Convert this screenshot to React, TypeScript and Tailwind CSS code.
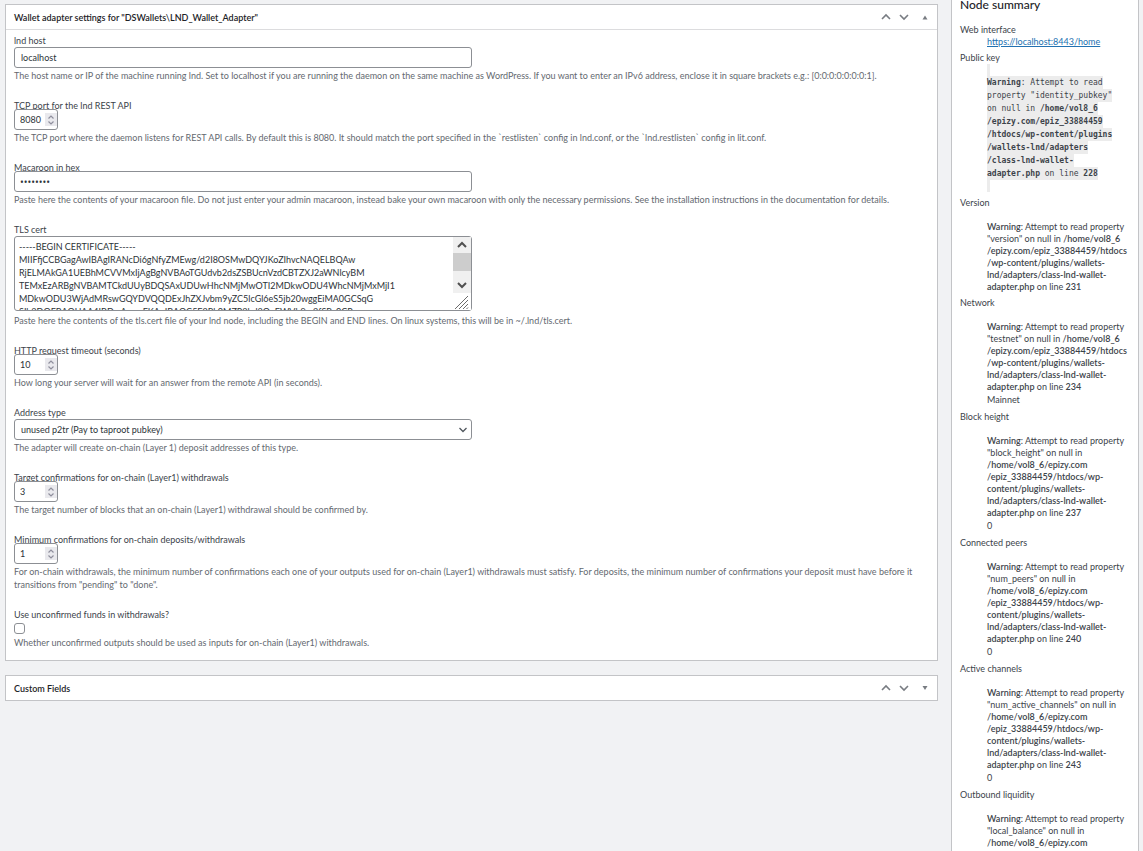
import type { ReactNode } from "react";

const CERT = `-----BEGIN CERTIFICATE-----
MIIFfjCCBGagAwIBAgIRANcDi6gNfyZMEwg/d2I8OSMwDQYJKoZIhvcNAQELBQAw
RjELMAkGA1UEBhMCVVMxIjAgBgNVBAoTGUdvb2dsZSBUcnVzdCBTZXJ2aWNlcyBM
TEMxEzARBgNVBAMTCkdUUyBDQSAxUDUwHhcNMjMwOTI2MDkwODU4WhcNMjMxMjI1
MDkwODU3WjAdMRswGQYDVQQDExJhZXJvbm9yZC5lcGl6eS5jb20wggEiMA0GCSqG
SIb3DQEBAQUAA4IBDwAwggEKAoIBAQC5F2Rk0MZP3hd3QoEWVh9m2fSRc0CP`;

type Warning = {
  title: string;
  property: string;
  path: string[];
  line: number;
  value?: string;
};

const SHORT_PATH = ["/epizy.com/epiz_33884459/htdocs", "/wp-content/plugins/wallets-", "lnd/adapters/class-lnd-wallet-", "adapter.php"];
const LONG_PATH = ["/home/vol8_6/epizy.com", "/epiz_33884459/htdocs/wp-", "content/plugins/wallets-", "lnd/adapters/class-lnd-wallet-", "adapter.php"];

const warnings: Warning[] = [
  { title: "Version", property: "version", path: ["/home/vol8_6", ...SHORT_PATH], line: 231 },
  { title: "Network", property: "testnet", path: ["/home/vol8_6", ...SHORT_PATH], line: 234, value: "Mainnet" },
  { title: "Block height", property: "block_height", path: ["", ...LONG_PATH], line: 237, value: "0" },
  { title: "Connected peers", property: "num_peers", path: ["", ...LONG_PATH], line: 240, value: "0" },
  { title: "Active channels", property: "num_active_channels", path: ["", ...LONG_PATH], line: 243, value: "0" },
  { title: "Outbound liquidity", property: "local_balance", path: ["", ...LONG_PATH], line: 246, value: "0" },
];

const inputClass =
  "block h-[21px] w-full rounded-[3px] border border-[#8c8f94] bg-white text-[#2c3338] outline-none";

function PanelHeader({ title, open }: { title: string; open: boolean }) {
  return (
    <div className="flex h-6 items-center justify-between pr-[7px] pl-2">
      <h2 className="font-semibold text-[#1d2327]">{title}</h2>
      <div className="flex items-center text-[#787c82]">
        <button type="button" aria-label="Move up" className="px-1">
          <svg className="h-2.5 w-2.5" viewBox="0 0 10 10" fill="none" stroke="currentColor" strokeWidth="1.6">
            <path d="M1 7 5 3l4 4" />
          </svg>
        </button>
        <button type="button" aria-label="Move down" className="px-1">
          <svg className="h-2.5 w-2.5" viewBox="0 0 10 10" fill="none" stroke="currentColor" strokeWidth="1.6">
            <path d="M1 3l4 4 4-4" />
          </svg>
        </button>
        <button type="button" aria-label="Toggle panel" aria-expanded={open} className="pl-[7px]">
          <svg className="h-2.5 w-2.5" viewBox="0 0 10 10" fill="currentColor">
            <path d={open ? "M2.500 7.500h5L5 3.500z" : "M2.500 3h5L5 7z"} />
          </svg>
        </button>
      </div>
    </div>
  );
}

function Field({ id, label, help, children }: { id: string; label: string; help: string; children: ReactNode }) {
  return (
    <div>
      <label htmlFor={id} className="block leading-3">
        {label}
      </label>
      {children}
      <p className="mt-px text-[#646970]">{help}</p>
    </div>
  );
}

function NumberInput({ id, value }: { id: string; value: number }) {
  return (
    <div className="relative -mt-[3px] w-11">
      <input
        id={id}
        type="number"
        defaultValue={value}
        className={`${inputClass} px-[5px] [&::-webkit-inner-spin-button]:appearance-none`}
      />
      <span className="pointer-events-none absolute inset-y-1 right-px flex w-3 items-center justify-center bg-[#e9e9ed] text-[#8f8f9d]">
        <svg className="h-2.5 w-2" viewBox="0 0 8 10" fill="none" stroke="currentColor" strokeWidth="1.2">
          <path d="M1.500 3.500 4 1l2.500 2.500M1.500 6.500 4 9l2.500-2.500" />
        </svg>
      </span>
    </div>
  );
}

function NodeWarning({ title, property, path, line, value }: Warning) {
  return (
    <>
      <dt>{title}</dt>
      <dd className="mb-[3px] ml-[27px] whitespace-nowrap">
        <p className="pt-3 leading-3">
          <b className="font-semibold">Warning</b>: Attempt to read property
          <br />"{property}" on null in{" "}
          {path.map((part, i) => (
            <b key={i} className="font-semibold">
              {i > 0 && <br />}
              {part}
            </b>
          ))}{" "}
          on line <b className="font-semibold">{line}</b>
        </p>
        {value && <p className="leading-[14px]">{value}</p>}
      </dd>
    </>
  );
}

export default function App() {
  return (
    <div className="flex h-screen items-start gap-[13px] overflow-hidden bg-[#f1f2f4] pr-1 pl-[5px] font-[Lato,sans-serif] text-[9px] leading-[13px] text-[#3c434a]">
      <main className="flex min-w-0 flex-1 flex-col gap-3.5 pt-1">
        <section className="border border-[#c3c4c7] bg-white">
          <PanelHeader title={'Wallet adapter settings for "DSWallets\\LND_Wallet_Adapter"'} open />
          <div className="flex flex-col gap-[18px] border-t border-[#dcdcde] px-2 pt-[5px] pb-[11px]">
            <Field
              id="host"
              label="lnd host"
              help="The host name or IP of the machine running lnd. Set to localhost if you are running the daemon on the same machine as WordPress. If you want to enter an IPv6 address, enclose it in square brackets e.g.: [0:0:0:0:0:0:0:1]."
            >
              <div className="w-1/2">
                <input id="host" type="text" defaultValue="localhost" className={`${inputClass} px-1.5`} />
              </div>
            </Field>
            <Field
              id="port"
              label="TCP port for the lnd REST API"
              help="The TCP port where the daemon listens for REST API calls. By default this is 8080. It should match the port specified in the `restlisten` config in lnd.conf, or the `lnd.restlisten` config in lit.conf."
            >
              <NumberInput id="port" value={8080} />
            </Field>
            <Field
              id="macaroon"
              label="Macaroon in hex"
              help="Paste here the contents of your macaroon file. Do not just enter your admin macaroon, instead bake your own macaroon with only the necessary permissions. See the installation instructions in the documentation for details."
            >
              <div className="relative -mt-[3px] w-1/2">
                <input
                  id="macaroon"
                  type="password"
                  defaultValue="macaroon"
                  className={`${inputClass} px-[5px] font-['Open_Sans'] text-[10px]`}
                />
              </div>
            </Field>
            <Field
              id="cert"
              label="TLS cert"
              help="Paste here the contents of the tls.cert file of your lnd node, including the BEGIN and END lines. On linux systems, this will be in ~/.lnd/tls.cert."
            >
              <div className="relative mb-[3px] w-1/2">
                <textarea
                  id="cert"
                  defaultValue={CERT}
                  className="block h-[75px] w-full resize-none overflow-hidden rounded-[3px] border border-[#8c8f94] bg-white px-1 pt-[3px] text-[#2c3338] outline-none"
                />
                <div className="pointer-events-none absolute inset-y-px right-px flex w-[18px] flex-col bg-white">
                  <div className="flex h-4 items-center justify-center bg-[#f0f0f0] text-[#505050]">
                    <svg className="h-2.5 w-2.5" viewBox="0 0 10 10" fill="none" stroke="currentColor" strokeWidth="2">
                      <path d="M1 7 5 3l4 4" />
                    </svg>
                  </div>
                  <div className="h-[18px] bg-[#cdcdcd]" />
                  <div className="flex h-[22px] items-end justify-center bg-[#f0f0f0] pb-[3px] text-[#505050]">
                    <svg className="h-2.5 w-2.5" viewBox="0 0 10 10" fill="none" stroke="currentColor" strokeWidth="2">
                      <path d="M1 3l4 4 4-4" />
                    </svg>
                  </div>
                  <svg className="mt-px h-4 w-4 text-[#6b6b6b]" viewBox="0 0 16 16" fill="none" stroke="currentColor">
                    <path d="M2 15 15 2M6 15l9-9M10 15l5-5M13.500 15l1.500-1.500" />
                  </svg>
                </div>
              </div>
            </Field>
            <Field
              id="timeout"
              label="HTTP request timeout (seconds)"
              help="How long your server will wait for an answer from the remote API (in seconds)."
            >
              <NumberInput id="timeout" value={10} />
            </Field>
            <Field
              id="address"
              label="Address type"
              help="The adapter will create on-chain (Layer 1) deposit addresses of this type."
            >
              <div className="relative w-1/2">
                <select id="address" className={`${inputClass} appearance-none px-1.5`}>
                  <option>unused p2tr (Pay to taproot pubkey)</option>
                </select>
                <svg
                  className="pointer-events-none absolute top-1.5 right-1 h-2.5 w-2.5 text-[#50575e]"
                  viewBox="0 0 10 10"
                  fill="none"
                  stroke="currentColor"
                  strokeWidth="1.3"
                >
                  <path d="M1.500 3 5 6.500 8.500 3" />
                </svg>
              </div>
            </Field>
            <Field
              id="target"
              label="Target confirmations for on-chain (Layer1) withdrawals"
              help="The target number of blocks that an on-chain (Layer1) withdrawal should be confirmed by."
            >
              <NumberInput id="target" value={3} />
            </Field>
            <Field
              id="minimum"
              label="Minimum confirmations for on-chain deposits/withdrawals"
              help={'For on-chain withdrawals, the minimum number of confirmations each one of your outputs used for on-chain (Layer1) withdrawals must satisfy. For deposits, the minimum number of confirmations your deposit must have before it transitions from "pending" to "done".'}
            >
              <NumberInput id="minimum" value={1} />
            </Field>
            <Field
              id="unconfirmed"
              label="Use unconfirmed funds in withdrawals?"
              help="Whether unconfirmed outputs should be used as inputs for on-chain (Layer1) withdrawals."
            >
              <input
                id="unconfirmed"
                type="checkbox"
                className="my-0.5 block h-[11px] w-[11px] appearance-none rounded-[3px] border border-[#8c8f94] bg-white"
              />
            </Field>
          </div>
        </section>

        <section className="border border-[#c3c4c7] bg-white">
          <PanelHeader title="Custom Fields" open={false} />
        </section>
      </main>

      <aside className="h-screen w-[188px] shrink-0 overflow-hidden border-x border-[#c3c4c7] bg-white px-2">
        <h2 className="mb-[13px] text-[12px] leading-[10px] font-medium text-[#1d2327]">Node summary</h2>
        <dl>
          <dt>Web interface</dt>
          <dd className="mb-[3px] ml-[27px] leading-3">
            <a href="https://localhost:8443/home" className="text-[#2271b1] underline">
              https://localhost:8443/home
            </a>
          </dd>
          <dt>Public key</dt>
          <dd className="mb-1 ml-[27px] font-['DejaVu_Sans_Mono',monospace] text-[8px] whitespace-nowrap">
            <div className="h-3 w-[3px] bg-[#ececec]" />
            <code className="bg-[#ececec] py-[2px] font-[inherit]">
              <b>Warning</b>: Attempt to read
              <br />
              property "identity_pubkey"
              <br />
              on null in <b>/home/vol8_6</b>
              <br />
              <b>/epizy.com/epiz_33884459</b>
              <br />
              <b>/htdocs/wp-content/plugins</b>
              <br />
              <b>/wallets-lnd/adapters</b>
              <br />
              <b>/class-lnd-wallet-</b>
              <br />
              <b>adapter.php</b> on line <b>228</b>
            </code>
            <div className="h-3 w-[3px] bg-[#ececec]" />
          </dd>
          {warnings.map((w) => (
            <NodeWarning key={w.title} {...w} />
          ))}
        </dl>
      </aside>
    </div>
  );
}
